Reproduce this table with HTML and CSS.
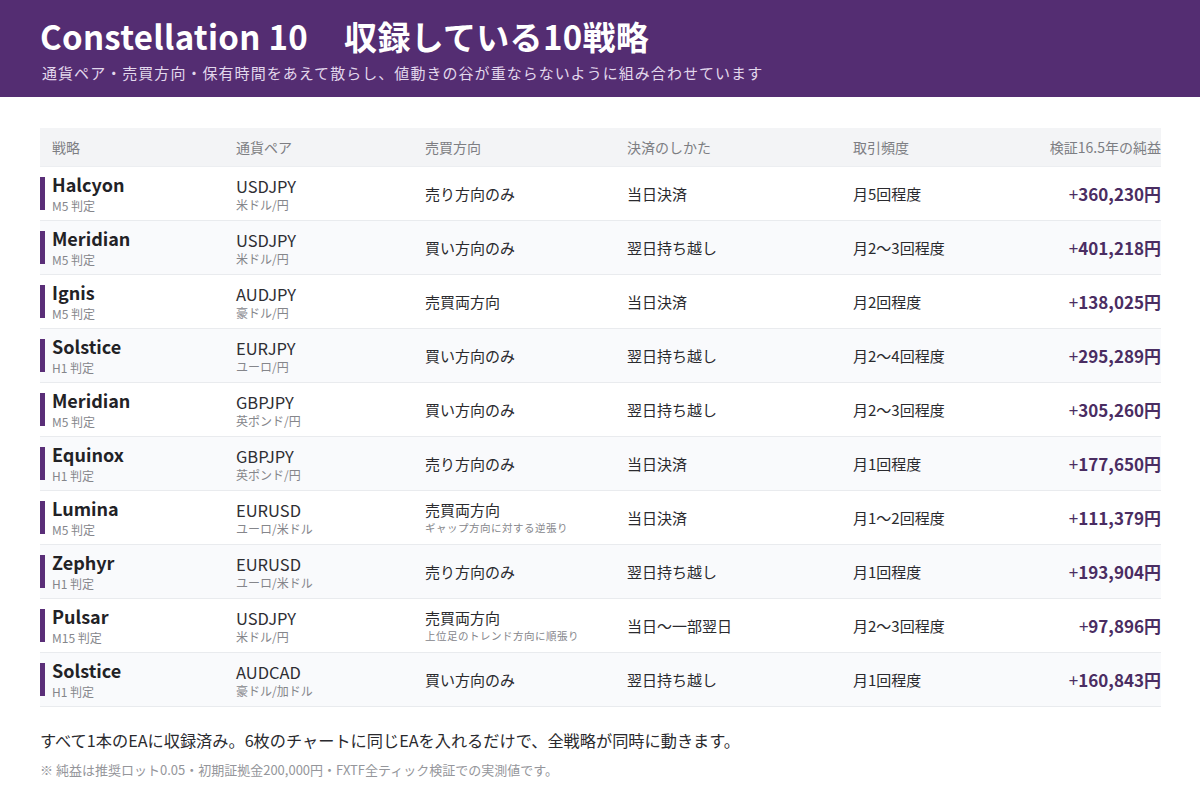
FILE: index.html
```html
<!DOCTYPE html>
<html lang="ja">
<head>
<meta charset="utf-8">
<title>Constellation 10</title>
<link rel="stylesheet" href="styles.css">
</head>
<body>
<header class="hero">
  <h1 class="hero-title">Constellation 10<span class="hero-gap"></span>収録している10戦略</h1>
  <p class="hero-sub">通貨ペア・売買方向・保有時間をあえて散らし、値動きの谷が重ならないように組み合わせています</p>
</header>
<main class="content">
  <div class="table">
    <div class="row head">
      <div class="cell">戦略</div>
      <div class="cell">通貨ペア</div>
      <div class="cell">売買方向</div>
      <div class="cell">決済のしかた</div>
      <div class="cell">取引頻度</div>
      <div class="cell right">検証16.5年の純益</div>
    </div>

    <div class="row">
      <div class="cell name"><span class="strat">Halcyon</span><span class="sub">M5 判定</span></div>
      <div class="cell"><span class="pair">USDJPY</span><span class="sub">米ドル/円</span></div>
      <div class="cell">売り方向のみ</div>
      <div class="cell">当日決済</div>
      <div class="cell">月5回程度</div>
      <div class="cell right profit"><span class="plus">+</span>360,230円</div>
    </div>
    <div class="row alt">
      <div class="cell name"><span class="strat">Meridian</span><span class="sub">M5 判定</span></div>
      <div class="cell"><span class="pair">USDJPY</span><span class="sub">米ドル/円</span></div>
      <div class="cell">買い方向のみ</div>
      <div class="cell">翌日持ち越し</div>
      <div class="cell">月2〜3回程度</div>
      <div class="cell right profit"><span class="plus">+</span>401,218円</div>
    </div>
    <div class="row">
      <div class="cell name"><span class="strat">Ignis</span><span class="sub">M5 判定</span></div>
      <div class="cell"><span class="pair">AUDJPY</span><span class="sub">豪ドル/円</span></div>
      <div class="cell">売買両方向</div>
      <div class="cell">当日決済</div>
      <div class="cell">月2回程度</div>
      <div class="cell right profit"><span class="plus">+</span>138,025円</div>
    </div>
    <div class="row alt">
      <div class="cell name"><span class="strat">Solstice</span><span class="sub">H1 判定</span></div>
      <div class="cell"><span class="pair">EURJPY</span><span class="sub">ユーロ/円</span></div>
      <div class="cell">買い方向のみ</div>
      <div class="cell">翌日持ち越し</div>
      <div class="cell">月2〜4回程度</div>
      <div class="cell right profit"><span class="plus">+</span>295,289円</div>
    </div>
    <div class="row">
      <div class="cell name"><span class="strat">Meridian</span><span class="sub">M5 判定</span></div>
      <div class="cell"><span class="pair">GBPJPY</span><span class="sub">英ポンド/円</span></div>
      <div class="cell">買い方向のみ</div>
      <div class="cell">翌日持ち越し</div>
      <div class="cell">月2〜3回程度</div>
      <div class="cell right profit"><span class="plus">+</span>305,260円</div>
    </div>
    <div class="row alt">
      <div class="cell name"><span class="strat">Equinox</span><span class="sub">H1 判定</span></div>
      <div class="cell"><span class="pair">GBPJPY</span><span class="sub">英ポンド/円</span></div>
      <div class="cell">売り方向のみ</div>
      <div class="cell">当日決済</div>
      <div class="cell">月1回程度</div>
      <div class="cell right profit"><span class="plus">+</span>177,650円</div>
    </div>
    <div class="row">
      <div class="cell name"><span class="strat">Lumina</span><span class="sub">M5 判定</span></div>
      <div class="cell"><span class="pair">EURUSD</span><span class="sub">ユーロ/米ドル</span></div>
      <div class="cell"><span class="dir">売買両方向</span><span class="note">ギャップ方向に対する逆張り</span></div>
      <div class="cell">当日決済</div>
      <div class="cell">月1〜2回程度</div>
      <div class="cell right profit"><span class="plus">+</span>111,379円</div>
    </div>
    <div class="row alt">
      <div class="cell name"><span class="strat">Zephyr</span><span class="sub">H1 判定</span></div>
      <div class="cell"><span class="pair">EURUSD</span><span class="sub">ユーロ/米ドル</span></div>
      <div class="cell">売り方向のみ</div>
      <div class="cell">翌日持ち越し</div>
      <div class="cell">月1回程度</div>
      <div class="cell right profit"><span class="plus">+</span>193,904円</div>
    </div>
    <div class="row">
      <div class="cell name"><span class="strat">Pulsar</span><span class="sub">M15 判定</span></div>
      <div class="cell"><span class="pair">USDJPY</span><span class="sub">米ドル/円</span></div>
      <div class="cell"><span class="dir">売買両方向</span><span class="note">上位足のトレンド方向に順張り</span></div>
      <div class="cell">当日〜一部翌日</div>
      <div class="cell">月2〜3回程度</div>
      <div class="cell right profit"><span class="plus">+</span>97,896円</div>
    </div>
    <div class="row alt">
      <div class="cell name"><span class="strat">Solstice</span><span class="sub">H1 判定</span></div>
      <div class="cell"><span class="pair">AUDCAD</span><span class="sub">豪ドル/加ドル</span></div>
      <div class="cell">買い方向のみ</div>
      <div class="cell">翌日持ち越し</div>
      <div class="cell">月1回程度</div>
      <div class="cell right profit"><span class="plus">+</span>160,843円</div>
    </div>
  </div>

  <p class="lead">すべて1本のEAに収録済み。6枚のチャートに同じEAを入れるだけで、全戦略が同時に動きます。</p>
  <p class="fine">※ 純益は推奨ロット0.05・初期証拠金200,000円・FXTF全ティック検証での実測値です。</p>
</main>
</body>
</html>
```

FILE: styles.css
```css
* { box-sizing: border-box; }
html, body {
  margin: 0;
  padding: 0;
  background: #ffffff;
  font-family: "Noto Sans CJK JP", "Noto Sans", sans-serif;
  color: #2a2a2e;
}
.hero {
  background: #542d72;
  height: 97px;
  padding: 13px 40px 0;
}
.hero-title {
  margin: 0;
  font-size: 33px;
  line-height: 46px;
  font-weight: 700;
  color: #ffffff;
  letter-spacing: 0.3px;
}
.hero-gap { display: inline-block; width: 36px; }
.hero-sub {
  margin: 4px 0 0 2px;
  font-size: 15px;
  line-height: 20px;
  color: #e2d8ec;
  letter-spacing: 1.05px;
}
.content {
  padding: 31px 39px 0 40px;
}
.table {
  display: flex;
  flex-direction: column;
}
.row {
  display: grid;
  grid-template-columns: 184px 189px 202px 226px 1fr 200px;
  height: 54px;
  border-bottom: 1px solid #e9ebee;
  align-items: center;
  font-size: 15px;
  color: #2a2a2e;
}
.row.alt { background: #f9fafc; }
.row.head {
  height: 39px;
  background: #f3f4f6;
  border-bottom: 1px solid #eceef1;
  font-size: 14px;
  color: #7d7e83;
}
.cell {
  padding-left: 12px;
  display: flex;
  flex-direction: column;
  justify-content: center;
  line-height: 20px;
}
.cell.right {
  align-items: flex-end;
  padding-left: 0;
  padding-right: 0;
}
.cell.name {
  position: relative;
  height: 100%;
  padding-bottom: 1px;
}
.cell.name::before {
  content: "";
  position: absolute;
  left: 0;
  top: 10px;
  bottom: 10px;
  width: 5px;
  background: #5a2e78;
}
.strat {
  font-size: 18px;
  font-weight: 700;
  line-height: 22px;
  margin-bottom: 3px;
  color: #222226;
}
.pair {
  font-size: 16.5px;
  line-height: 22px;
  color: #2e2e33;
}
.sub {
  font-size: 12px;
  line-height: 16px;
  color: #85868b;
}
.dir { font-size: 15px; line-height: 20px; }
.note {
  font-size: 10.5px;
  line-height: 16px;
  color: #85868b;
  letter-spacing: 0.5px;
}
.profit {
  display: block;
  text-align: right;
  font-size: 17px;
  font-weight: 700;
  color: #4a2d62;
}
.plus { font-weight: 400; }
.lead {
  margin: 22px 0 0;
  font-size: 16.2px;
  line-height: 22px;
  color: #2a2a2e;
}
.fine {
  margin: 10px 0 0;
  font-size: 13px;
  line-height: 18px;
  color: #95969b;
}
```
